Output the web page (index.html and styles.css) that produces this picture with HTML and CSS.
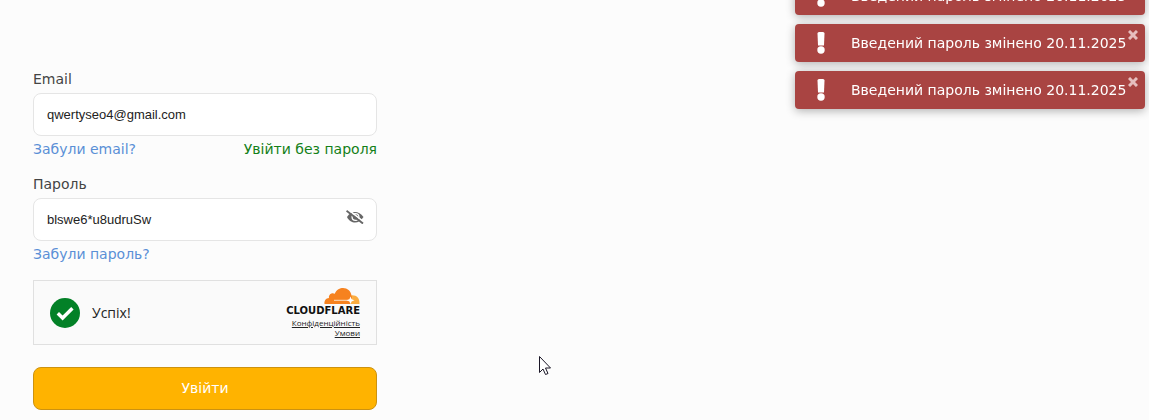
FILE: index.html
```html
<!DOCTYPE html>
<html lang="uk">
<head>
    <meta charset="UTF-8">
    <meta name="viewport" content="width=device-width, initial-scale=1.0">
    <title>Увійти</title>
    <link rel="stylesheet" href="styles.css">
</head>
<body>
    <main class="login-page">
        <form class="login-form">
            <div class="form-group">
                <label for="email">Email</label>
                <input class="form-input" type="text" id="email" name="email" value="qwertyseo4@gmail.com">
                <div class="form-links">
                    <a class="link" href="#">Забули email?</a>
                    <a class="link link-green" href="#">Увійти без пароля</a>
                </div>
            </div>

            <div class="form-group">
                <label for="password">Пароль</label>
                <div class="password-box">
                    <input class="form-input" type="text" id="password" name="password" value="blswe6*u8udruSw">
                    <button class="toggle-password" type="button" aria-label="Сховати пароль">
                        <svg viewBox="0 0 18 14" width="18" height="14">
                            <path d="M1 7C3 3.500 6 2 9 2S15 3.500 17.500 7C15 11 12 12.500 9 12.500S3 11 1 7Z" fill="#666"/>
                            <circle cx="9.500" cy="7" r="3.400" fill="none" stroke="#fff" stroke-width="1.300"/>
                            <path d="M2 -0.500L18 12" stroke="#fff" stroke-width="1.600"/>
                            <path d="M0.500 0.800L17 13.500" stroke="#666" stroke-width="1.900"/>
                        </svg>
                    </button>
                </div>
                <div class="form-links">
                    <a class="link" href="#">Забули пароль?</a>
                </div>
            </div>

            <div class="captcha">
                <svg class="captcha-icon" viewBox="0 0 30 30" width="30" height="30">
                    <circle cx="15" cy="15" r="15" fill="#038127"/>
                    <path d="M7.800 15.200L12.600 20L22.400 10.200" fill="none" stroke="#fff" stroke-width="3.400"/>
                </svg>
                <span class="captcha-text">Успіх!</span>
                <div class="captcha-brand">
                    <svg class="captcha-logo" viewBox="0 0 36 16" width="36" height="16">
                        <path d="M0.500 16C0 12.500 2 10.300 5 10C4.300 6.600 7.600 4 10.800 5.700C12.500 1.500 16 0 19 0C23.500 0 26.700 3 27.500 7.200C28.500 8 28.300 9.500 27.800 11L26.300 16Z" fill="#f6821f"/>
                        <path d="M27.500 7.200C32.500 6.800 36 10 35.500 16H26L28.200 10Z" fill="#fbad41"/>
                        <path d="M10 12.300H25" stroke="#fde0c2" stroke-width="1"/>
                        <path d="M26.500 8.500L27.600 11.200L30.500 12.300L27.600 13.400L26.500 16L25.400 13.400L22.500 12.300L25.400 11.200Z" fill="#fff"/>
                    </svg>
                    <span class="captcha-name">CLOUDFLARE</span>
                    <a class="captcha-link" href="#">Конфіденційність</a>
                    <a class="captcha-link" href="#">Умови</a>
                </div>
            </div>

            <button class="btn-submit" type="submit">Увійти</button>
        </form>
    </main>

    <div class="toasts">
        <div class="toast">
            <svg class="toast-icon" viewBox="0 0 8 22" width="8" height="22">
                <path d="M0.500 1.500Q0.500 0 2 0H6Q7.500 0 7.500 1.500L7 13.500H1Z" fill="#fff"/>
                <circle cx="4" cy="18" r="3.700" fill="#fff"/>
            </svg>
            <span class="toast-text">Введений пароль змінено 20.11.2025</span>
            <button class="toast-close" type="button" aria-label="Закрити">
                <svg viewBox="0 0 10 10" width="10" height="10"><path d="M1 1L9 9M9 1L1 9" stroke="#e6bebe" stroke-width="3"/></svg>
            </button>
        </div>
        <div class="toast">
            <svg class="toast-icon" viewBox="0 0 8 22" width="8" height="22">
                <path d="M0.500 1.500Q0.500 0 2 0H6Q7.500 0 7.500 1.500L7 13.500H1Z" fill="#fff"/>
                <circle cx="4" cy="18" r="3.700" fill="#fff"/>
            </svg>
            <span class="toast-text">Введений пароль змінено 20.11.2025</span>
            <button class="toast-close" type="button" aria-label="Закрити">
                <svg viewBox="0 0 10 10" width="10" height="10"><path d="M1 1L9 9M9 1L1 9" stroke="#e6bebe" stroke-width="3"/></svg>
            </button>
        </div>
        <div class="toast">
            <svg class="toast-icon" viewBox="0 0 8 22" width="8" height="22">
                <path d="M0.500 1.500Q0.500 0 2 0H6Q7.500 0 7.500 1.500L7 13.500H1Z" fill="#fff"/>
                <circle cx="4" cy="18" r="3.700" fill="#fff"/>
            </svg>
            <span class="toast-text">Введений пароль змінено 20.11.2025</span>
            <button class="toast-close" type="button" aria-label="Закрити">
                <svg viewBox="0 0 10 10" width="10" height="10"><path d="M1 1L9 9M9 1L1 9" stroke="#e6bebe" stroke-width="3"/></svg>
            </button>
        </div>
    </div>

    <svg class="cursor" viewBox="0 0 12 20" width="12" height="20">
        <path d="M0.500 0.500V16.500L4 13L6.500 18.500L9 17.500L6.500 12H11.500Z" fill="#fff" stroke="#1a1626" stroke-width="1"/>
    </svg>
</body>
</html>
```

FILE: styles.css
```css
/* General Styling */
body {
    font-family: Verdana, 'DejaVu Sans', sans-serif;
    font-size: 14px;
    line-height: 22px;
    background-color: #fcfcfc;
    color: #444;
    margin: 0;
}

button {
    border: none;
    padding: 0;
    background: none;
    cursor: pointer;
}

svg {
    display: block;
}

/* Login Form */
.login-page {
    padding: 68px 33px 10px;
}

.login-form {
    max-width: 344px;
}

.form-group {
    margin-bottom: 13px;
}

label {
    display: block;
    margin-bottom: 3px;
}

.form-input {
    display: block;
    box-sizing: border-box;
    width: 100%;
    height: 43px;
    padding: 0 13px;
    border: 1px solid #e5e5e5;
    border-radius: 8px;
    background-color: #fff;
    color: #222;
    font-family: Arial, 'Liberation Sans', sans-serif;
    font-size: 13px;
}

.password-box {
    position: relative;
}

.toggle-password {
    position: absolute;
    top: 12px;
    right: 13px;
}

.form-links {
    display: flex;
    justify-content: space-between;
    margin-top: 2px;
}

.link {
    color: #5a8fd6;
    text-decoration: none;
}

.link-green {
    color: #138018;
}

/* Captcha */
.captcha {
    display: flex;
    align-items: center;
    box-sizing: border-box;
    height: 65px;
    margin-top: 15px;
    padding: 0 16px;
    border: 1px solid #e0e0e0;
    background-color: #fafafa;
}

.captcha-text {
    margin-left: 12px;
    color: #232323;
    font-family: 'Open Sans', sans-serif;
}

.captcha-brand {
    display: flex;
    flex-direction: column;
    align-items: flex-end;
    margin-left: auto;
}

.captcha-name {
    color: #111;
    font-family: 'DejaVu Sans', sans-serif;
    font-size: 10px;
    font-weight: bold;
    line-height: 14px;
}

.captcha-link {
    color: #232323;
    font-family: 'Open Sans', sans-serif;
    font-size: 8px;
    line-height: 10px;
}

/* Submit Button */
.btn-submit {
    width: 100%;
    height: 43px;
    margin-top: 22px;
    padding-bottom: 2px;
    border: 1px solid #cc9210;
    border-radius: 8px;
    background-color: #ffb300;
    color: #fff;
    font-family: inherit;
    font-size: 14px;
}

/* Notifications */
.toasts {
    position: fixed;
    top: -23px;
    right: 4px;
    display: flex;
    flex-direction: column;
    gap: 9px;
    width: 350px;
}

.toast {
    position: relative;
    display: flex;
    align-items: center;
    height: 38px;
    border-radius: 4px;
    background-color: #a94442;
    color: #fff;
    box-shadow: 0 2px 10px rgba(0, 0, 0, 0.3);
}

.toast-icon {
    margin: 0 26px 0 22px;
}

.toast-text {
    white-space: nowrap;
}

.toast-close {
    position: absolute;
    top: 6px;
    right: 7px;
}

/* Mouse Pointer */
.cursor {
    position: fixed;
    top: 356px;
    left: 539px;
}
```
